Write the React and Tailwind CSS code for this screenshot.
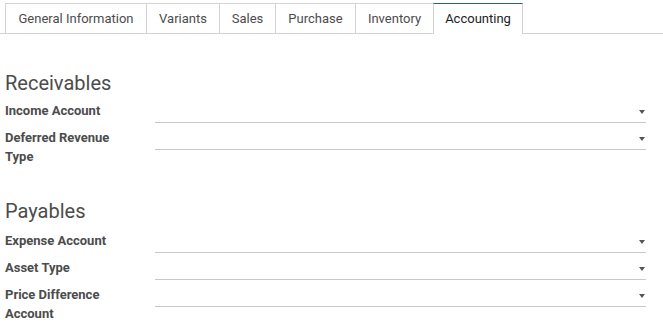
import React from "react";

const tabs = [
  { label: "General Information", w: "w-[141px]" },
  { label: "Variants", w: "w-[73px]" },
  { label: "Sales", w: "w-[56px]" },
  { label: "Purchase", w: "w-[80px]" },
  { label: "Inventory", w: "w-[78px]" },
];

function Field({ label }) {
  return (
    <div className="flex items-start mb-[5px]">
      <div className="w-[150px] shrink-0">
        <div className="w-[125px] text-[13px] font-bold leading-[19px] text-[#4c4c4c]">
          {label}
        </div>
      </div>
      <div className="relative w-[491px] h-[22px] border-b border-[#c8c8c8]">
        <span className="absolute right-[1px] top-[9px] w-0 h-0 border-l-[3px] border-r-[3px] border-t-[4px] border-l-transparent border-r-transparent border-t-[#555]" />
      </div>
    </div>
  );
}

export default function App() {
  return (
    <div
      className="w-[663px] h-[333px] bg-white overflow-hidden"
      style={{ fontFamily: "Roboto, 'Liberation Sans', sans-serif" }}
    >
      <div className="flex pt-[3px] pl-[5px] border-b border-[#d3d3d3] h-[34px]">
        {tabs.map((t) => (
          <div
            key={t.label}
            className={`${t.w} h-[30px] border-t border-l border-[#d3d3d3] flex items-center justify-center text-[13px] text-[#4c4c4c]`}
          >
            {t.label}
          </div>
        ))}
        <div className="w-[90px] h-[31px] border-t border-t-[#2c5d8a] border-l border-r border-l-[#d3d3d3] border-r-[#d3d3d3] bg-white flex items-center justify-center pb-[1px] text-[13px] text-[#222]">
          Accounting
        </div>
      </div>
      <div className="px-[5px]">
        <div className="mt-[37px] text-[20px] leading-[24px] text-[#4c4c4c]">Receivables</div>
        <div className="mt-[6px]">
          <Field label="Income Account" />
          <Field label="Deferred Revenue Type" />
        </div>
        <div className="mt-[33px] text-[20px] leading-[24px] text-[#4c4c4c]">Payables</div>
        <div className="mt-[8px]">
          <Field label="Expense Account" />
          <Field label="Asset Type" />
          <Field label="Price Difference Account" />
        </div>
      </div>
    </div>
  );
}
